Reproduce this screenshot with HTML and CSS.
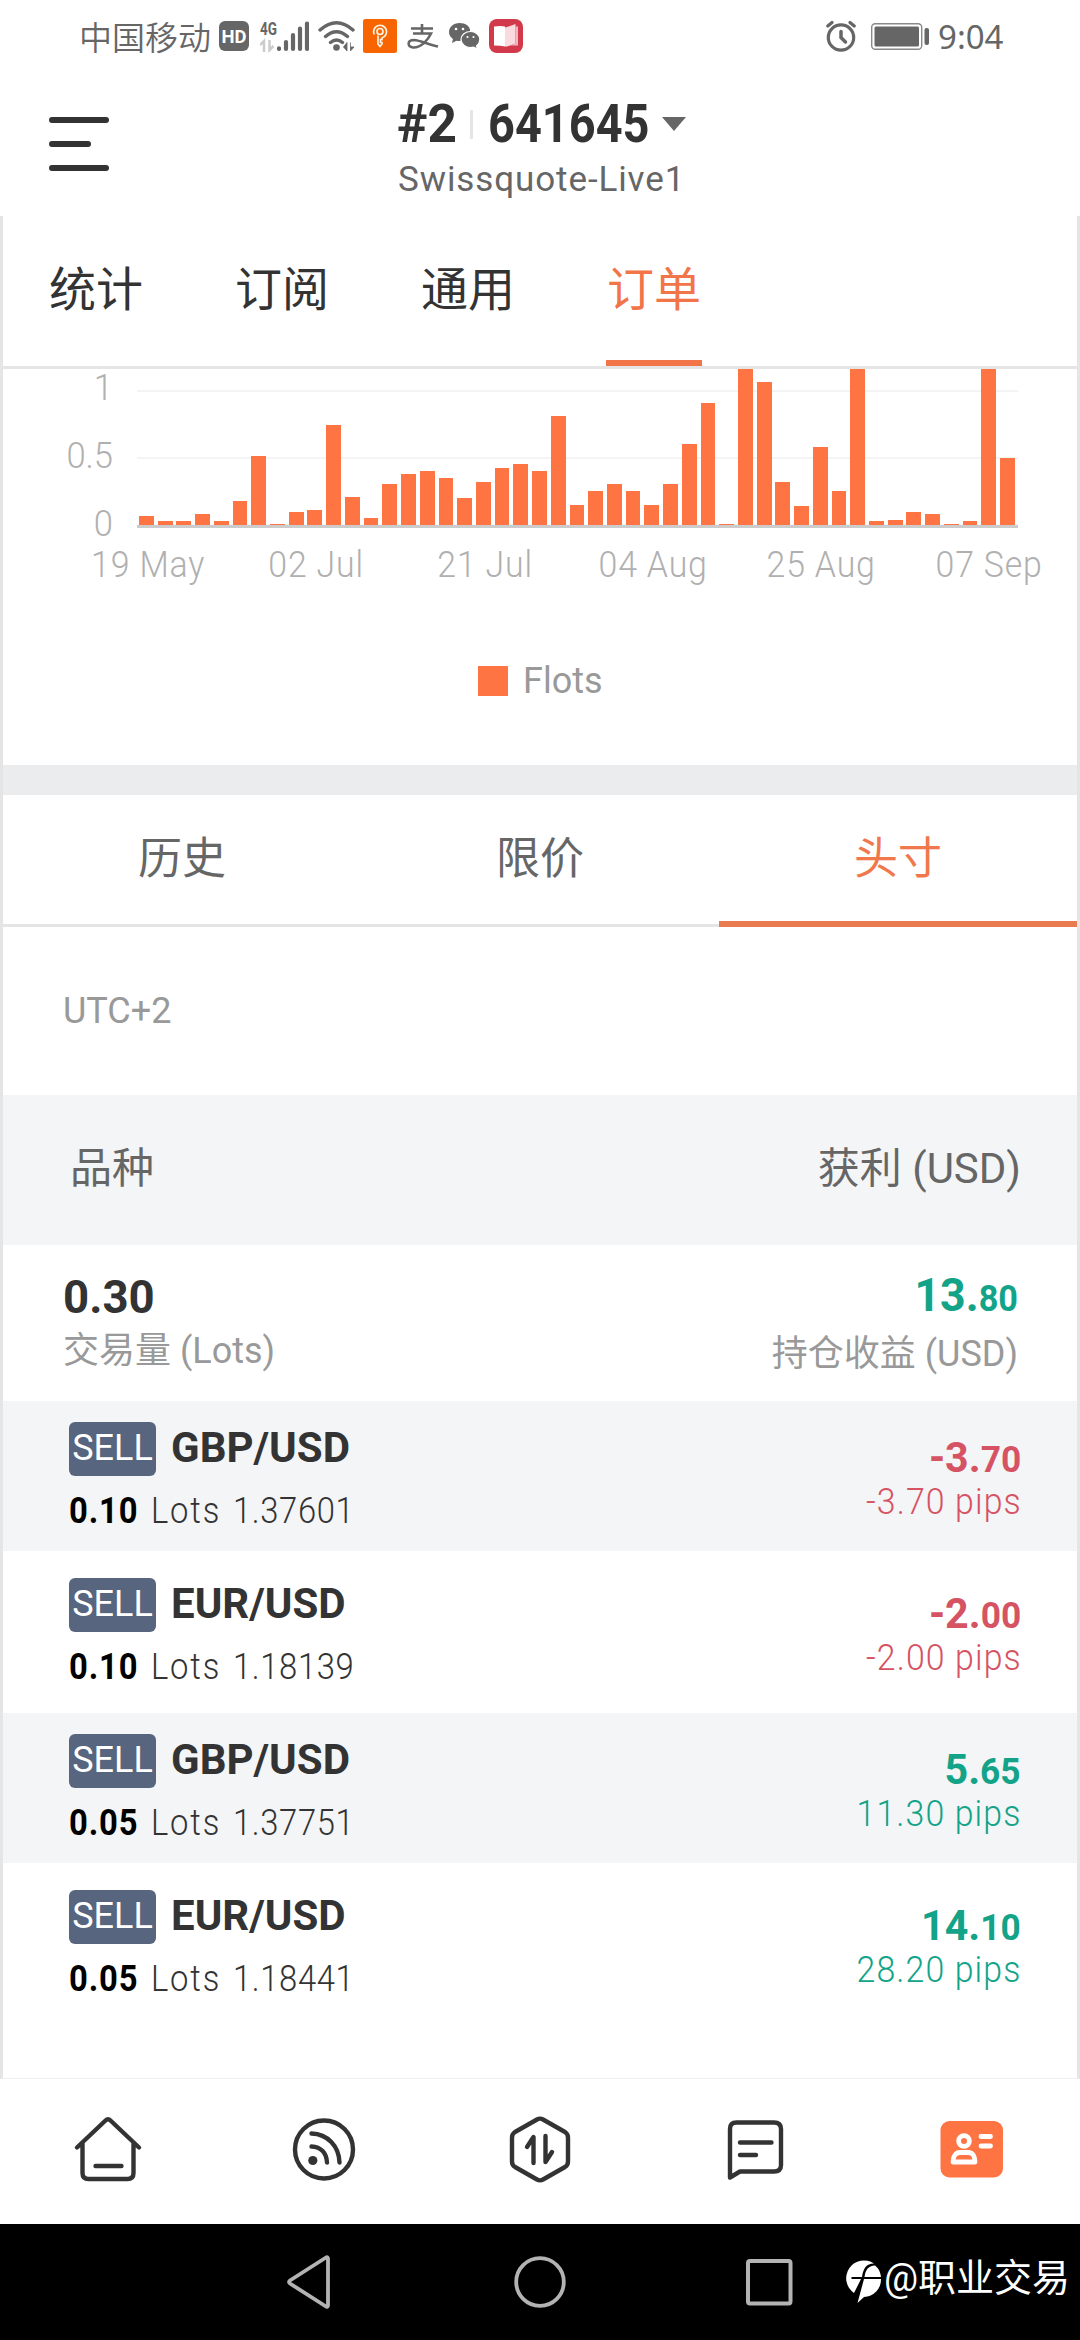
FILE: index.html
```html
<!DOCTYPE html>
<html lang="zh-CN">
<head>
<meta charset="utf-8">
<title>641645</title>
<link rel="stylesheet" href="styles.css">
</head>
<body>
<div class="screen">
  <div class="status">
    <span class="carrier">中国移动</span>
    <svg class="s-hd" width="30" height="34" viewBox="0 0 30 34"><rect y="2" width="30" height="30" rx="6" fill="#666"/><text x="15" y="23.5" text-anchor="middle" textLength="25" lengthAdjust="spacingAndGlyphs" class="hd-text">HD</text></svg>
    <svg class="s-net" width="49" height="34" viewBox="0 0 49 34"><text x="0" y="15.500" textLength="17" lengthAdjust="spacingAndGlyphs" class="g-text">4G</text><path d="M0 26l4-4v11M9.500 21v10l4-4" fill="none" stroke="#ccc" stroke-width="2.500"/><g stroke="#666" stroke-width="4.200" stroke-linecap="round"><path d="M19 29.400v.6M26 23v7M33 16v14M40 9.500V30M47 4.500V30"/></g></svg>
    <svg class="s-wifi" width="37" height="34" viewBox="0 0 37 34"><g fill="none" stroke="#666" stroke-width="3.400" stroke-linecap="round"><path d="M2 11Q18.500-3.500 35 11M7.500 17.500q11-9.500 22 0M12.500 23.500q6-5 12 0"/></g><circle cx="18.500" cy="28.500" r="3.300" fill="#666"/><path d="M25.500 28l3.500-4.500V32zM32.500 31.500V23.500M32.500 28h3.500l-3.500 4" fill="#666" stroke="#666" stroke-width=".8"/></svg>
    <svg class="s-key" width="34" height="34" viewBox="0 0 34 34"><rect width="34" height="34" rx="2.500" fill="#f76400"/><g fill="none" stroke="#fff2df" stroke-width="1.700"><circle cx="17" cy="12.500" r="3"/><path d="M11.200 15.500A6.500 6.500 0 1 1 19 19v1.500h-1.500v3H19v1.500l-2 2.500-2-2.500v-8.500"/></g></svg>
    <svg class="s-ali" width="32" height="34" viewBox="0 0 32 34"><path d="M4 9.500h22M15 5v9.500M6 14.500h18C21 21 14 29 6 28.500c-6-1-6-7.500 1-7.500 7 .5 15 5 24 6.500" fill="none" stroke="#666" stroke-width="2.600"/></svg>
    <svg class="s-wechat" width="31" height="34" viewBox="0 0 31 34"><path d="M10.500 4C4.500 4 0 8 0 13c0 3 1.500 5.300 4 7l-1 4 4.500-2.200c6 1.300 13.800-2.800 13.800-8.800S16.500 4 10.500 4z" fill="#666"/><path d="M21.500 12.500c-5 0-9.500 3.500-9.500 8s4.500 8 9.500 8c1 0 2-.1 3-.4l4 2-1-3.200c2-1.500 3.300-3.800 3.300-6.400 0-4.500-4.300-8-9.300-8z" fill="#666" stroke="#fff" stroke-width="1.200"/><g fill="#fff"><circle cx="7" cy="10" r="1.300"/><circle cx="14" cy="10" r="1.300"/><circle cx="18.500" cy="18" r="1.100"/><circle cx="24.500" cy="18" r="1.100"/></g></svg>
    <svg class="s-book" width="34" height="34" viewBox="0 0 34 34"><rect width="34" height="34" rx="8" fill="#d23a4c"/><path d="M5 7.500q7-1 11 0v20q-4-1-11-1z" fill="#fff"/><path d="M16 8.500l2-.5v19.500h-2zM18 8l8.500-3v19.500L18 27.500z" fill="#fadade"/><path d="M26.500 7.500H29v19H21l5.500-2z" fill="#f3b7c0"/></svg>
    <svg class="s-alarm" width="30" height="34" viewBox="0 0 30 34"><g fill="none" stroke="#666" stroke-width="3.200" stroke-linecap="round"><circle cx="15" cy="18.500" r="12.700"/><path d="M15 12.500v6l4.500 4.500" stroke-width="3.500"/><path d="M1.800 7l4.200-3.500M28.200 7L24 3.500"/></g></svg>
    <svg class="s-batt" width="58" height="34" viewBox="0 0 58 34"><rect x=".7" y="4.700" width="50" height="25.600" rx="3.500" fill="none" stroke="#888" stroke-width="1.400"/><rect x="3.500" y="7.500" width="44.500" height="20" rx="1.500" fill="#666"/><rect x="53.500" y="9" width="4.500" height="17" rx="2" fill="#666"/></svg>
    <span class="clock">9:04</span>
  </div>

  <div class="header">
    <div class="burger"><i></i><i class="short"></i><i></i></div>
    <div class="account">
      <div class="title"><b class="rank">#2</b><i class="sep"></i><b class="number">641645</b><i class="caret"></i></div>
      <div class="server">Swissquote-Live1</div>
    </div>
  </div>

  <div class="content">
    <div class="tabs"><span>统计</span><span>订阅</span><span>通用</span><span class="on">订单</span></div>
    <div class="chart">
      <div class="ylabels"><span>1</span><span>0.5</span><span>0</span></div>
      <div class="plot">
        <i style="height:9.500px"></i><i style="height:4px"></i><i style="height:4px"></i><i style="height:11px"></i><i style="height:4px"></i><i style="height:24.500px"></i><i style="height:69px"></i><i style="height:1.500px"></i><i style="height:13.500px"></i><i style="height:15px"></i><i style="height:100px"></i><i style="height:28.500px"></i><i style="height:7px"></i><i style="height:41px"></i><i style="height:51.500px"></i><i style="height:54px"></i><i style="height:47.500px"></i><i style="height:27px"></i><i style="height:43px"></i><i style="height:57px"></i><i style="height:61px"></i><i style="height:54px"></i><i style="height:109px"></i><i style="height:20.500px"></i><i style="height:34px"></i><i style="height:41px"></i><i style="height:34px"></i><i style="height:20.500px"></i><i style="height:41px"></i><i style="height:81px"></i><i style="height:122px"></i><i style="height:1.500px"></i><i style="height:156px"></i><i style="height:143px"></i><i style="height:43px"></i><i style="height:19px"></i><i style="height:78.500px"></i><i style="height:34px"></i><i style="height:156px"></i><i style="height:4px"></i><i style="height:5.500px"></i><i style="height:13.500px"></i><i style="height:11px"></i><i style="height:1.500px"></i><i style="height:4px"></i><i style="height:156px"></i><i style="height:67.500px"></i>
      </div>
    </div>
    <div class="xlabels"><span>19 May</span><span>02 Jul</span><span>21 Jul</span><span>04 Aug</span><span>25 Aug</span><span>07 Sep</span></div>
    <div class="legend"><i></i><span>Flots</span></div>
    <div class="band"></div>
    <div class="subtabs"><span>历史</span><span>限价</span><span class="on">头寸</span></div>
    <div class="tz">UTC+2</div>
    <div class="thead"><span>品种</span><span>获利 (USD)</span></div>
    <div class="summary">
      <div class="sum-left"><b class="fit-left">0.30</b><span>交易量 (Lots)</span></div>
      <div class="sum-right"><b class="fit-right up">13.<small>80</small></b><span>持仓收益 (USD)</span></div>
    </div>
    <div class="row shade">
      <div class="left"><div class="pair"><span class="badge">SELL</span><b>GBP/USD</b></div><div class="lots"><b>0.10</b><span class="unit">Lots</span><span>1.37601</span></div></div>
      <div class="right down"><b>-3.<small>70</small></b><span>-3.70 pips</span></div>
    </div>
    <div class="row">
      <div class="left"><div class="pair"><span class="badge">SELL</span><b>EUR/USD</b></div><div class="lots"><b>0.10</b><span class="unit">Lots</span><span>1.18139</span></div></div>
      <div class="right down"><b>-2.<small>00</small></b><span>-2.00 pips</span></div>
    </div>
    <div class="row shade">
      <div class="left"><div class="pair"><span class="badge">SELL</span><b>GBP/USD</b></div><div class="lots"><b>0.05</b><span class="unit">Lots</span><span>1.37751</span></div></div>
      <div class="right up"><b>5.<small>65</small></b><span>11.30 pips</span></div>
    </div>
    <div class="row">
      <div class="left"><div class="pair"><span class="badge">SELL</span><b>EUR/USD</b></div><div class="lots"><b>0.05</b><span class="unit">Lots</span><span>1.18441</span></div></div>
      <div class="right up"><b>14.<small>10</small></b><span>28.20 pips</span></div>
    </div>
  </div>

  <div class="nav">
    <svg width="72" height="72" viewBox="0 0 72 72"><g fill="none" stroke="#333" stroke-width="4.400" stroke-linecap="round" stroke-linejoin="round"><path d="M5 34.500L33.500 7.500Q36 5 38.500 7.500L67 34.500M10.500 29.500V60q0 6 6 6h39q6 0 6-6V29.500"/><path d="M23.500 53h26"/></g></svg>
    <svg width="72" height="72" viewBox="0 0 72 72"><g fill="none" stroke="#333" stroke-width="4.400" stroke-linecap="round"><circle cx="36" cy="36.500" r="29"/><path d="M23.500 20.500c16 .5 27.500 12.500 28 29M23.500 33.500c9.500.5 15 6.500 15.500 16"/></g><circle cx="24.800" cy="47.500" r="4.600" fill="#333"/></svg>
    <svg width="72" height="72" viewBox="0 0 72 72"><g fill="none" stroke="#333" stroke-width="4.400" stroke-linecap="round" stroke-linejoin="round"><path d="M33 6.500q3-1.700 6 0l22 12.500q3 2 3 5.500v24q0 3.500-3 5.500L39 66.500q-3 1.700-6 0L11 54q-3-2-3-5.500v-24q0-3.500 3-5.500z"/><path d="M23 34l6.500-10v26M41.500 23v26l6.500-10"/></g></svg>
    <svg width="72" height="72" viewBox="0 0 72 72"><g fill="none" stroke="#333" stroke-width="4.400" stroke-linecap="round" stroke-linejoin="round"><path d="M10 64.500V16q0-6.500 6.500-6.500H54q7 0 7 6.500v36q0 6.500-7 6.500H20z"/><path d="M20 29.500h31.500M20 42h16"/></g></svg>
    <svg width="72" height="72" viewBox="0 0 72 72"><rect x="4.500" y="8" width="62.500" height="56.500" rx="9" fill="#ff7443"/><g fill="none" stroke="#fff" stroke-width="4.800" stroke-linejoin="round"><circle cx="28" cy="28" r="5.400"/><path d="M17 49c0-6 3-9.500 7-9.500h8.500c4 0 6.500 3.500 6.500 9.500z"/><path d="M45 23.500h9.500M45 33h9.500" stroke-linecap="round"/></g></svg>
  </div>

  <div class="system">
    <svg class="back" width="46" height="54" viewBox="0 0 46 54"><path d="M42 3.500v47q-.5 2-2 1L4 28.500q-2-1.500 0-3L40 2.500q1.500-1 2 1z" fill="none" stroke="#b3b3b3" stroke-width="3.800"/></svg>
    <svg class="home" width="54" height="54" viewBox="0 0 54 54"><circle cx="27" cy="27" r="23.800" fill="none" stroke="#b3b3b3" stroke-width="3.800"/></svg>
    <svg class="recent" width="48" height="54" viewBox="0 0 48 54"><rect x="3" y="6" width="42.500" height="42.500" rx="2" fill="none" stroke="#b3b3b3" stroke-width="4"/></svg>
    <div class="mark">
      <svg width="36" height="44" viewBox="0 0 36 44"><path d="M8 33A17.500 17.500 0 0 1 28 3.500C20 4 17.500 8 16 17H5.500v2H15zM18 19h17A17.500 17.500 0 0 1 18 37l-6.500 6zM18.500 17C19.500 10 22 6 29 5.500c4 3 5.500 7 6 11.500z" fill="#fff"/></svg>
      <span>@职业交易</span>
    </div>
  </div>
</div>
</body>
</html>
```
FILE: styles.css
```css
* { box-sizing: border-box; }
body {
  margin: 0;
  background: #fff;
  font-family: Roboto, "Noto Sans CJK SC", sans-serif;
  color: #333;
}
i, b, small { display: block; font-style: normal; }
svg { display: block; flex: none; }
span, b { white-space: nowrap; }

.screen { width: 1080px; height: 2340px; display: flex; flex-direction: column; overflow: hidden; }

/* status bar */
.status { height: 72px; padding: 0 75px 0 79px; display: flex; align-items: center; color: #666; flex: none; }
.carrier { width: 133px; font: 350 33px/50px "Noto Sans CJK SC", sans-serif; }
.hd-text { font: 700 19px Roboto, sans-serif; fill: #fff; }
.g-text { font: 700 18px Roboto, sans-serif; fill: #666; }
.s-hd { margin-left: 7px; }
.s-net { margin-left: 11px; }
.s-wifi { margin-left: 9px; }
.s-key { margin-left: 8px; }
.s-ali { margin-left: 10px; }
.s-wechat { margin-left: 10px; }
.s-book { margin-left: 9px; }
.s-alarm { margin-left: auto; }
.s-batt { margin-left: 15px; }
.clock { width: 67px; margin-left: 9px; font: 400 33px/52px "Noto Sans", sans-serif; padding-top: 1px; }

/* account header */
.header { height: 144px; flex: none; display: grid; grid-template-columns: 397px 1fr; }
.burger { padding: 45px 0 0 49px; display: flex; flex-direction: column; gap: 18px; }
.burger i { width: 60px; height: 6px; border-radius: 3px; background: #333; }
.burger .short { width: 42px; }
.title { display: flex; align-items: center; height: 62px; margin-top: 21px; font-size: 53px; line-height: 62px; }
.rank { width: 73px; transform: scaleX(.97); transform-origin: left; }
.sep { width: 3px; height: 29px; background: #e5e5e5; }
.number { width: 189px; padding-left: 17px; transform: scaleX(.885); transform-origin: left; }
.caret { border: 12px solid transparent; border-top: 14px solid #666; border-bottom: 0; }
.server { margin: 3px 0 0 1px; font-size: 35px; line-height: 44px; color: #666; letter-spacing: .9px; }

/* scroll area */
.content { height: 1863px; flex: none; border: solid #e5e5e5; border-width: 0 3px; border-bottom: 1px solid #eee; }
.tabs { height: 153px; border-bottom: 3px solid #e5e5e5; padding-left: 45px; display: flex; gap: 90px; }
.tabs span { font-size: 47px; line-height: 148px; width: 96px; height: 150px; text-align: center; }
.tabs .on { color: #f2754a; border-bottom: 6px solid #f2754a; }

.chart { height: 159px; display: flex; }
.ylabels { width: 134px; height: 172px; padding-right: 24px; display: flex; flex-direction: column; gap: 24px; margin-top: -3px; text-align: right; font-weight: 300; font-size: 36px; color: #b0b0b0; }
.ylabels span { line-height: 44px; height: 44px; flex: none; transform: scaleX(.96); transform-origin: right; }
.plot {
  width: 881px; height: 159px; padding: 0 3px 0 2px; overflow: hidden;
  border-bottom: 3px solid #ccc;
  display: flex; justify-content: space-between; align-items: flex-end;
  background: linear-gradient(#f4f4f4, #f4f4f4) 0 21px / 100% 2px no-repeat, linear-gradient(#f4f4f4, #f4f4f4) 0 88px / 100% 2px no-repeat;
}
.plot i { width: 14.800px; background: #ff7443; flex: none; }
.xlabels { height: 100px; padding: 15px 0 0 61px; display: grid; grid-template-columns: repeat(6, 168.300px); text-align: center; font-weight: 300; font-size: 36px; line-height: 44px; color: #b0b0b0; letter-spacing: .9px; }
.xlabels span { transform: scaleX(.94); }
.legend { height: 137px; padding: 38px 0 0 475px; display: flex; gap: 15px; font-size: 36px; line-height: 30px; color: #999; }
.legend i { width: 30px; height: 30px; background: #ff7443; }
.band { height: 30px; background: #ebeced; }

.subtabs { height: 132px; display: grid; grid-template-columns: 1fr 1fr 1fr; grid-template-rows: 132px; text-align: center; font-size: 44px; color: #666; }
.subtabs span { padding-top: 4px; line-height: 120px; border-bottom: 3px solid #e5e5e5; }
.subtabs .on { color: #f0784c; border-bottom: 6px solid #e97b4f; }
.tz { height: 168px; padding: 62px 0 0 60px; font-size: 36px; line-height: 44px; color: #999; }
.thead { height: 150px; padding: 0 56px 0 67px; background: #f4f5f7; display: flex; justify-content: space-between; font-size: 42px; line-height: 148px; color: #666; }

.summary { height: 156px; padding: 0 59px 0 60px; display: flex; justify-content: space-between; color: #999; font-size: 36px; line-height: 44px; }
.summary div { display: flex; flex-direction: column; }
.summary b { font-size: 47px; line-height: 50px; height: 50px; }
.summary small { display: inline; font-size: 36px; }
.sum-left { padding-top: 27px; align-items: flex-start; }
.sum-left b { color: #333; }
.sum-left span { margin-top: 7px; }
.sum-right { padding-top: 25px; align-items: flex-end; }
.sum-right span { margin-top: 12px; }
.fit-left { transform: scaleX(.97); transform-origin: left; }
.fit-right { transform: scaleX(.95); transform-origin: right; }

.row { height: 150px; margin-bottom: 6px; padding: 21px 56px 0 66px; display: flex; justify-content: space-between; }
.shade { background: #f4f5f7; }
.pair { display: flex; gap: 15px; height: 54px; }
.pair b { font-size: 42px; line-height: 52px; }
.badge { width: 87px; border-radius: 6px; background: #57657e; color: #fff; font-size: 36px; line-height: 53px; text-align: center; }
.lots { display: grid; grid-template-columns: 82px 82px auto; margin-top: 13px; font-size: 36px; line-height: 44px; font-weight: 300; }
.lots > * { transform: scaleX(.91); transform-origin: left; letter-spacing: .7px; }
.lots .unit { letter-spacing: 2px; }
.lots b { font-weight: 700; color: #000; letter-spacing: 1px; }
.right { display: flex; flex-direction: column; align-items: flex-end; padding-top: 11px; font-size: 36px; font-weight: 300; }
.right b { font-size: 42px; line-height: 50px; height: 50px; font-weight: 700; }
.right small { display: inline; font-size: 36px; }
.right span { line-height: 44px; margin-top: -3px; letter-spacing: 1.2px; margin-right: -1px; }
.right > * { transform: scaleX(.94); transform-origin: right; }
.right > b { transform: scaleX(.98); }
.down { color: #d55363; }
.up { color: #12a388; }

/* bottom navigation */
.nav { height: 145px; flex: none; display: flex; justify-content: space-around; padding-top: 34px; }
.system { height: 116px; flex: none; background: #000; display: flex; padding-top: 31px; }
.back { margin-left: 286px; }
.home { margin-left: 181px; }
.recent { margin-left: 178px; }
.mark { display: flex; margin-left: 53px; gap: 2px; color: #fff; padding-top: 5px; }
.mark span { font-size: 38px; line-height: 37px; }
```
